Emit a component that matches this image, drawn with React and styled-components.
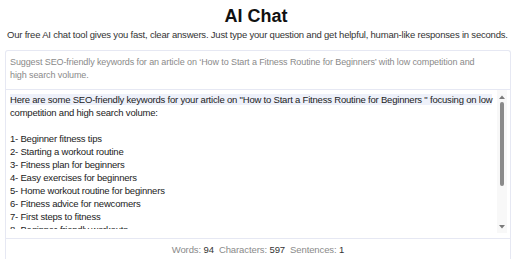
import React from "react";
import styled, { createGlobalStyle } from "styled-components";

const Global = createGlobalStyle`
  html, body { margin: 0; padding: 0; background: #fff; }
  body { font-family: "Liberation Sans", Arial, sans-serif; color: #222; }
`;

const Page = styled.div`
  width: 512px;
  height: 259px;
  overflow: hidden;
  display: flex;
  flex-direction: column;
  align-items: stretch;
`;

const Title = styled.h1`
  margin: 4px 0 0;
  font-size: 18px;
  line-height: 24px;
  font-weight: 700;
  text-align: center;
  color: #111;
`;

const Subtitle = styled.p`
  margin: 0 0 0 7px;
  font-size: 9.5px;
  letter-spacing: -0.2px;
  line-height: 14px;
  color: #333;
  white-space: nowrap;
`;

const Box = styled.div`
  margin: 8px 1px 0 5px;
  border: 1px solid #e6e8f3;
  border-bottom: none;
  border-radius: 3px 3px 0 0;
  display: flex;
  flex-direction: column;
  flex: 1;
  min-height: 0;
`;

const Prompt = styled.div`
  box-sizing: border-box;
  height: 39px;
  padding: 5px 4px 0 4px;
  font-size: 9px;
  letter-spacing: -0.1px;
  line-height: 13px;
  color: #8a8a8a;
  border-bottom: 1px solid #e6e8f3;
  white-space: nowrap;
  overflow: hidden;
  flex: none;
`;

const ResponseRow = styled.div`
  flex: 1;
  min-height: 0;
  display: flex;
  margin: 0 3px 5px 0;
`;

const Response = styled.div`
  flex: 1;
  min-width: 0;
  overflow: hidden;
  margin-bottom: 4px;
  padding: 3px 3px 0 4px;
  font-size: 9.5px;
  letter-spacing: -0.2px;
  line-height: 13px;
  color: #222;
  white-space: pre-wrap;
`;

const ScrollTrack = styled.div`
  flex: none;
  width: 10px;
  background: #f8f8f8;
  display: flex;
  flex-direction: column;
  align-items: center;
  padding: 4px 0 3px;
  box-sizing: border-box;
`;

const Arrow = styled.svg`
  flex: none;
  width: 8px;
  height: 6px;
  display: block;
`;

const ThumbArea = styled.div`
  flex: 1;
  width: 100%;
  display: flex;
  justify-content: center;
  padding: 2px 0;
`;

const Thumb = styled.div`
  width: 4px;
  height: 84px;
  border-radius: 2px;
  background: #8a8a8a;
`;

const Highlight = styled.span`
  background: #eef1fa;
`;

const Footer = styled.div`
  flex: none;
  height: 20px;
  border-top: 1px solid #e6e8f3;
  display: flex;
  align-items: center;
  justify-content: center;
  gap: 5px;
  font-size: 9.5px;
  letter-spacing: -0.1px;
  color: #8a8a8a;
`;

const Stat = styled.span`
  & b { font-weight: 400; color: #333; }
`;

const items = [
  "Beginner fitness tips",
  "Starting a workout routine",
  "Fitness plan for beginners",
  "Easy exercises for beginners",
  "Home workout routine for beginners",
  "Fitness advice for newcomers",
  "First steps to fitness",
  "Beginner-friendly workouts",
  "Simple fitness routines",
  "How to get fit as a beginner",
  "Basic exercise guide",
  "Fitness for beginners at home",
];

export default function App() {
  const list = items.map((t, i) => `${i + 1}- ${t}`).join("\n");
  return (
    <Page>
      <Global />
      <Title>AI Chat</Title>
      <Subtitle>
        Our free AI chat tool gives you fast, clear answers. Just type your question and get helpful, human-like responses in seconds.
      </Subtitle>
      <Box>
        <Prompt>
          Suggest SEO-friendly keywords for an article on ‘How to Start a Fitness Routine for Beginners’ with low competition and
          <br />
          high search volume.
        </Prompt>
        <ResponseRow>
          <Response>
            <Highlight>Here are some SEO-friendly keywords for your article on "How to Start a Fitness Routine for Beginners " focusing on low</Highlight>
            {" competition and high search volume:\n\n"}
            {list}
          </Response>
          <ScrollTrack>
            <Arrow viewBox="0 0 8 6"><path d="M1 5 L4 1.5 L7 5 Z" fill="#7a7a7a" /></Arrow>
            <ThumbArea><Thumb /></ThumbArea>
            <Arrow viewBox="0 0 8 6"><path d="M1 1 L4 4.5 L7 1 Z" fill="#7a7a7a" /></Arrow>
          </ScrollTrack>
        </ResponseRow>
        <Footer>
          <Stat>Words: <b>94</b></Stat>
          <Stat>Characters: <b>597</b></Stat>
          <Stat>Sentences: <b>1</b></Stat>
        </Footer>
      </Box>
    </Page>
  );
}
